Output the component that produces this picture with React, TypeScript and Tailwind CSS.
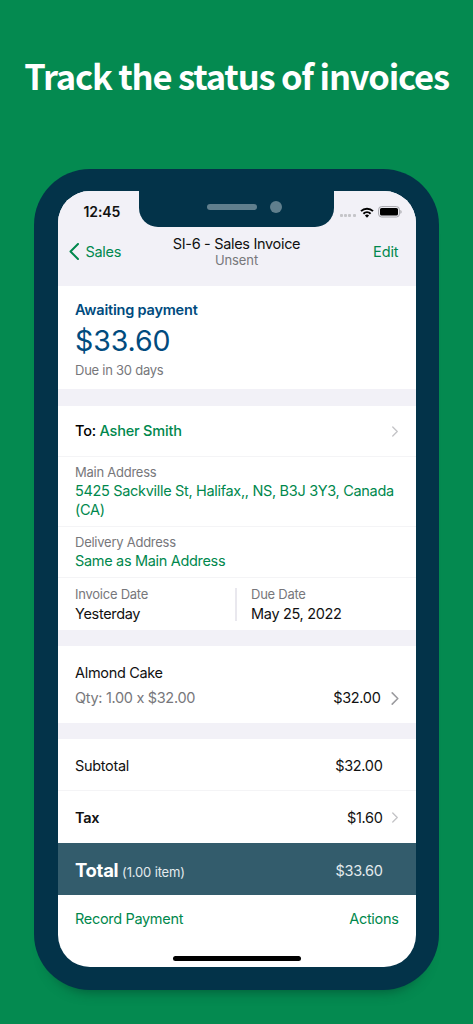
import { ReactNode } from "react"

interface RowProps {
  children: ReactNode
  className?: string
}

function Chevron({ className }: { className: string }) {
  return (
    <svg viewBox="0 0 8 14" fill="none" stroke="currentColor" strokeWidth="1.7" className={className}>
      <path d="M1 1l6 6-6 6" strokeLinecap="round" strokeLinejoin="round" />
    </svg>
  )
}

function Row({ children, className = "" }: RowProps) {
  return <div className={`flex justify-between pl-[17.5px] pr-[17px] ${className}`}>{children}</div>
}

function Label({ children }: { children: ReactNode }) {
  return <div className="text-[13px] leading-4 tracking-[-0.25px] text-[#77777b]">{children}</div>
}

function StatusBar() {
  return (
    <div className="relative flex h-[42px] items-center justify-between pl-[26px] pr-[14px]">
      <span className="text-[14px] font-semibold leading-5 tracking-[-0.1px]">12:45</span>
      <div className="absolute left-[81px] top-0 flex h-[35.5px] w-[195px] justify-center rounded-b-[19px] bg-[#033349]">
        <span className="absolute left-[68px] top-[13px] h-[6px] w-[50px] rounded-full bg-[#607f8d]" />
        <span className="absolute left-[131px] top-[10px] size-3 rounded-full bg-[#607f8d]" />
      </div>
      <div className="flex items-center">
        <div className="mr-1 mt-[7px] flex gap-[1.3px]">
          {[0, 1, 2, 3].map((dot) => (
            <span key={dot} className="size-[3px] rounded-[1px] bg-[#c5c5c9]" />
          ))}
        </div>
        <svg viewBox="0 0 14 11" className="mr-1 h-[11px] w-[14px]" fill="none" stroke="#000" strokeWidth="2">
          <path d="M1 4.1a8.7 8.7 0 0 1 12 0" />
          <path d="M3.4 6.7a5.2 5.2 0 0 1 7.2 0" />
          <path d="M7 10.7 4.9 8.5a3.1 3.1 0 0 1 4.2 0z" fill="#000" stroke="none" />
        </svg>
        <svg viewBox="0 0 24 12" className="h-3 w-6">
          <rect x="0.6" y="0.6" width="20.8" height="10.4" rx="3" fill="none" stroke="#a5a5aa" />
          <rect x="2" y="2" width="18" height="7.6" rx="1.6" />
          <path d="M22.4 4v3.7c.8-.3 1.2-1 1.2-1.8s-.4-1.6-1.2-1.9z" fill="#a5a5aa" />
        </svg>
      </div>
    </div>
  )
}

function Header() {
  return (
    <div className="flex h-[53px] justify-between pl-[11px] pr-[17px] pt-[3px]">
      <div className="flex h-5 w-[90px] items-center pt-[11px] text-[#00884d]">
        <svg viewBox="0 0 10 17" className="mr-[7px] h-[17px] w-[10px]" fill="none" stroke="currentColor" strokeWidth="2">
          <path d="M9 1 1.5 8.5 9 16" strokeLinecap="round" strokeLinejoin="round" />
        </svg>
        <span className="leading-5">Sales</span>
      </div>
      <div className="text-center">
        <div className="leading-4">SI-6 - Sales Invoice</div>
        <div className="text-[13px] leading-[17px] tracking-[-0.1px] text-[#77777b]">Unsent</div>
      </div>
      <div className="w-[84px] pt-[6px] text-right leading-5 tracking-[-0.1px] text-[#00884d]">Edit</div>
    </div>
  )
}

export default function App() {
  return (
    <main className="flex h-screen w-full flex-col items-center overflow-hidden bg-[#048a50] font-['Inter',sans-serif]">
      <h1 className="mt-[52px] h-[117px] whitespace-nowrap font-['Noto_Sans_CJK_JP',sans-serif] text-[34.5px] font-bold leading-[46px] tracking-[-1.17px] text-white">
        Track the status of invoices
      </h1>

      <div className="h-[821px] w-[405px] shrink-0 rounded-[56px] bg-[#033349] px-[23.5px] pt-[22px] shadow-[0_14px_12px_-12px_rgba(0,50,35,0.5)]">
        <div className="flex h-[776px] flex-col overflow-hidden rounded-[32px] bg-white text-[14.5px] tracking-[-0.32px] text-[#111]">
          <div className="bg-[#f2f1f7]">
            <StatusBar />
            <Header />
          </div>

          <section className="h-[103px] px-[17.5px] pt-[14px] text-[#004b7e]">
            <div className="font-semibold leading-5 tracking-[-0.2px]">Awaiting payment</div>
            <div className="text-[28.5px] leading-[42px] tracking-[-0.1px]">$33.60</div>
            <Label>Due in 30 days</Label>
          </section>

          <section className="border-t-[17px] border-[#f2f1f7]">
            <Row className="h-[51px] items-center border-b border-[#f4f4f6]">
              <div className="font-medium tracking-[-0.2px] text-black">
                To: <span className="text-[#00884d]">Asher Smith</span>
              </div>
              <Chevron className="mr-[1px] h-[11px] w-[6px] text-[#c3c3c6]" />
            </Row>
            <div className="h-[70px] border-b border-[#f4f4f6] pl-[17.5px] pt-[7px]">
              <Label>Main Address</Label>
              <div className="mt-px w-[325px] leading-[19px] text-[#00884d]">
                5425 Sackville St, Halifax,, NS, B3J 3Y3, Canada (CA)
              </div>
            </div>
            <div className="h-[51px] border-b border-[#f4f4f6] pl-[17.5px] pt-[7px]">
              <Label>Delivery Address</Label>
              <div className="mt-px leading-5 text-[#00884d]">Same as Main Address</div>
            </div>
            <div className="flex h-[52px] pl-[17.5px] pt-[8px]">
              <div className="w-[160px]">
                <Label>Invoice Date</Label>
                <div className="mt-px leading-[22px]">Yesterday</div>
              </div>
              <div className="mt-[2px] h-[33px] border-l-2 border-[#e9e8ee]" />
              <div className="pl-[14px]">
                <Label>Due Date</Label>
                <div className="mt-px leading-[22px]">May 25, 2022</div>
              </div>
            </div>
          </section>

          <section className="h-[93px] border-t-[16px] border-[#f2f1f7]">
            <Row className="pt-[17px]">
              <div>
                <div className="leading-5">Almond Cake</div>
                <div className="mt-[5px] leading-5 text-[#77777b]">Qty: 1.00 x $32.00</div>
              </div>
              <div className="flex h-5 items-center self-end">
                <span>$32.00</span>
                <Chevron className="ml-[10px] h-[13px] w-[8px] text-[#9b9b9f]" />
              </div>
            </Row>
          </section>

          <section className="border-t-[16px] border-[#f2f1f7]">
            <Row className="h-[52px] items-center border-b border-[#f4f4f6] pt-[2px]">
              <span>Subtotal</span>
              <span className="mr-[16px]">$32.00</span>
            </Row>
            <Row className="h-[52px] items-center pt-px">
              <span className="font-semibold">Tax</span>
              <div className="flex items-center">
                <span>$1.60</span>
                <Chevron className="ml-[9px] mr-[1px] h-[11px] w-[6px] text-[#c3c3c6]" />
              </div>
            </Row>
          </section>

          <Row className="h-[52px] items-center bg-[#335c6c] pt-[3px] text-white">
            <div>
              <span className="text-[18.5px] font-bold">Total</span>{" "}
              <span className="text-[13px] tracking-[-0.15px] text-[#e3eaed]">(1.00 item)</span>
            </div>
            <span className="mr-[16px] text-[#e3eaed]">$33.60</span>
          </Row>
          <footer className="flex h-[72px] flex-col items-center">
            <div className="flex w-full justify-between pl-[17.5px] pr-[17px] pt-[14px] leading-5 text-[#00884d]">
              <span>Record Payment</span>
              <span>Actions</span>
            </div>
            <div className="mt-[26.5px] h-[5px] w-32 rounded-full bg-black" />
          </footer>
        </div>
      </div>
    </main>
  )
}
